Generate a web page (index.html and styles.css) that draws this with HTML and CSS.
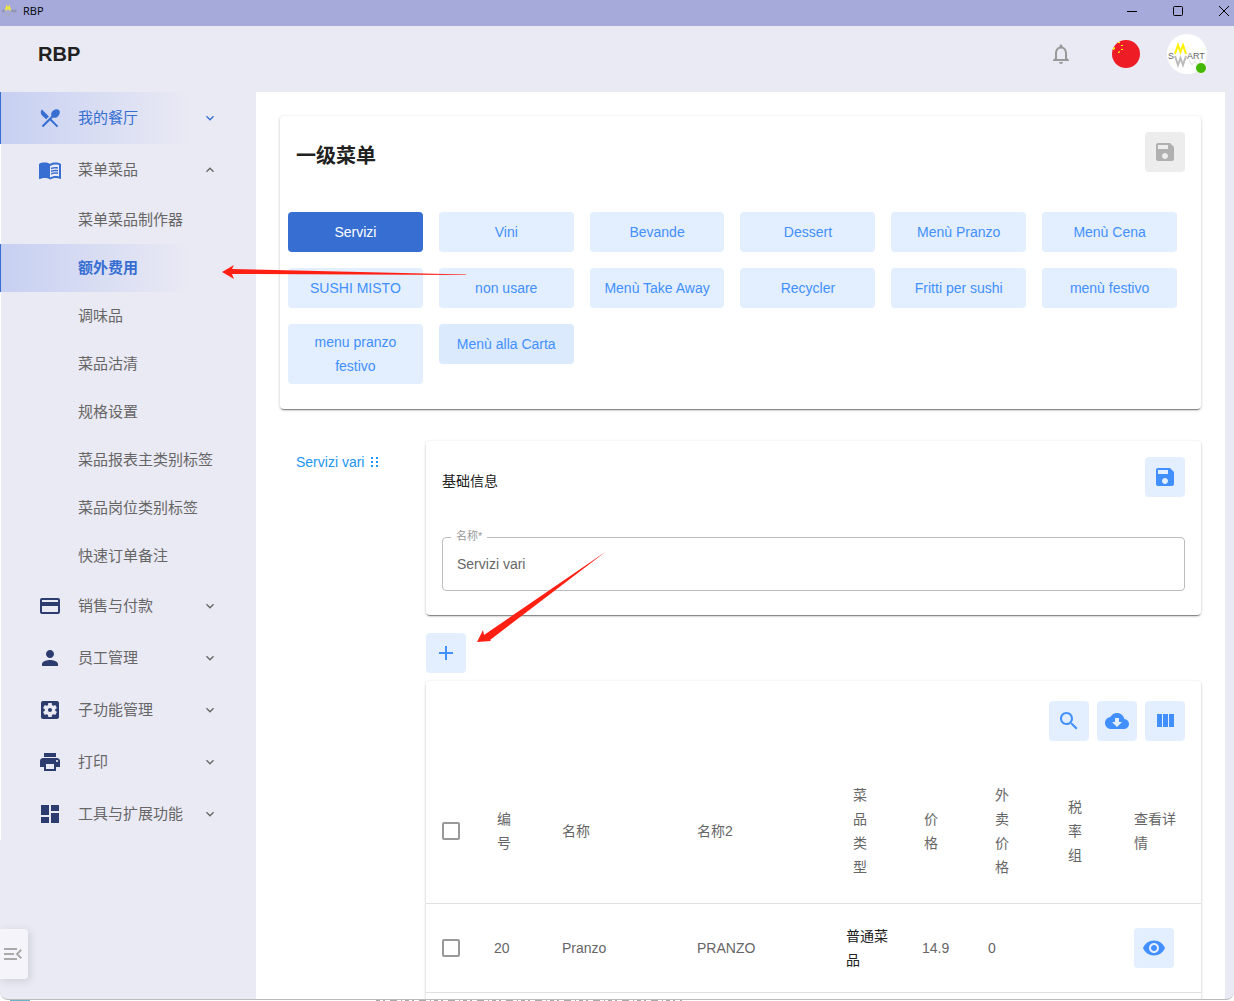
FILE: index.html
```html
<!DOCTYPE html>
<html lang="zh-CN">
<head>
<meta charset="utf-8">
<meta name="viewport" content="width=device-width, initial-scale=1">
<title>RBP</title>
<link rel="stylesheet" href="styles.css">
</head>
<body>
<svg class="sprite" aria-hidden="true">
  <symbol id="i-dining" viewBox="0 0 24 24"><path d="M8.1 13.34l2.83-2.83L3.91 3.5c-1.56 1.56-1.56 4.09 0 5.66l4.19 4.18zm6.78-1.81c1.53.71 3.68.21 5.27-1.38 1.91-1.91 2.28-4.65.81-6.12-1.46-1.46-4.2-1.1-6.12.81-1.59 1.59-2.09 3.74-1.38 5.27L3.7 19.87l1.41 1.41L12 14.41l6.88 6.88 1.41-1.41L13.41 13l1.47-1.47z"/></symbol>
  <symbol id="i-book" viewBox="0 0 24 24"><path d="M21 5c-1.11-.35-2.33-.5-3.5-.5-1.95 0-4.05.4-5.5 1.5-1.45-1.1-3.55-1.5-5.5-1.5S2.45 4.9 1 6v14.65c0 .25.25.5.5.5.1 0 .15-.05.25-.05C3.1 20.45 5.05 20 6.5 20c1.95 0 4.05.4 5.5 1.5 1.35-.85 3.8-1.5 5.5-1.5 1.65 0 3.35.3 4.75 1.05.1.05.15.05.25.05.25 0 .5-.25.5-.5V6c-.6-.45-1.25-.75-2-1zm0 13.5c-1.1-.35-2.3-.5-3.5-.5-1.7 0-4.15.65-5.5 1.5V8c1.35-.85 3.8-1.5 5.5-1.5 1.2 0 2.4.15 3.5.5v11.5z"/><path d="M17.5 10.5c.88 0 1.73.09 2.5.26V9.24c-.79-.15-1.64-.24-2.5-.24-1.7 0-3.24.29-4.5.83v1.66c1.13-.64 2.7-.99 4.5-.99zM13 12.49v1.66c1.13-.64 2.7-.99 4.5-.99.88 0 1.73.09 2.5.26V11.9c-.79-.15-1.64-.24-2.5-.24-1.7 0-3.24.3-4.5.83zm4.5 1.84c-1.7 0-3.24.29-4.5.83v1.66c1.13-.64 2.7-.99 4.5-.99.88 0 1.73.09 2.5.26v-1.52c-.79-.16-1.64-.24-2.5-.24z"/></symbol>
  <symbol id="i-card" viewBox="0 0 24 24"><path d="M20 4H4c-1.11 0-1.99.89-1.99 2L2 18c0 1.11.89 2 2 2h16c1.11 0 2-.89 2-2V6c0-1.11-.89-2-2-2zm0 14H4v-6h16v6zm0-10H4V6h16v2z"/></symbol>
  <symbol id="i-person" viewBox="0 0 24 24"><path d="M12 12c2.21 0 4-1.79 4-4s-1.79-4-4-4-4 1.79-4 4 1.79 4 4 4zm0 2c-2.67 0-8 1.34-8 4v2h16v-2c0-2.66-5.33-4-8-4z"/></symbol>
  <symbol id="i-settings" viewBox="0 0 24 24"><path d="M12 10c-1.1 0-2 .9-2 2s.9 2 2 2 2-.9 2-2-.9-2-2-2zm7-7H5c-1.11 0-2 .9-2 2v14c0 1.1.89 2 2 2h14c1.11 0 2-.9 2-2V5c0-1.1-.89-2-2-2zm-1.75 9c0 .23-.02.46-.05.68l1.48 1.16c.13.11.17.3.08.45l-1.4 2.42c-.09.15-.27.21-.43.15l-1.74-.7c-.36.28-.76.51-1.18.69l-.26 1.85c-.03.17-.18.3-.35.3h-2.8c-.17 0-.32-.13-.35-.29l-.26-1.85c-.43-.18-.82-.41-1.18-.69l-1.74.7c-.16.06-.34 0-.43-.15l-1.4-2.42c-.09-.15-.05-.34.08-.45l1.48-1.16c-.03-.23-.05-.46-.05-.69 0-.23.02-.46.05-.68l-1.48-1.16c-.13-.11-.17-.3-.08-.45l1.4-2.42c.09-.15.27-.21.43-.15l1.74.7c.36-.28.76-.51 1.18-.69l.26-1.85c.03-.17.18-.3.35-.3h2.8c.17 0 .32.13.35.29l.26 1.85c.43.18.82.41 1.18.69l1.74-.7c.16-.06.34 0 .43.15l1.4 2.42c.09.15.05.34-.08.45l-1.48 1.16c.03.23.05.46.05.69z"/></symbol>
  <symbol id="i-print" viewBox="0 0 24 24"><path d="M19 8H5c-1.66 0-3 1.34-3 3v6h4v4h12v-4h4v-6c0-1.66-1.34-3-3-3zm-3 11H8v-5h8v5zm3-7c-.55 0-1-.45-1-1s.45-1 1-1 1 .45 1 1-.45 1-1 1zm-1-9H6v4h12V3z"/></symbol>
  <symbol id="i-dashboard" viewBox="0 0 24 24"><path d="M3 13h8V3H3v10zm0 8h8v-6H3v6zm10 0h8V11h-8v10zm0-18v6h8V3h-8z"/></symbol>
  <symbol id="i-down" viewBox="0 0 24 24"><path d="M16.59 8.59L12 13.17 7.41 8.59 6 10l6 6 6-6z"/></symbol>
  <symbol id="i-up" viewBox="0 0 24 24"><path d="M12 8l-6 6 1.41 1.41L12 10.83l4.59 4.58L18 14z"/></symbol>
  <symbol id="i-save" viewBox="0 0 24 24"><path d="M17 3H5c-1.11 0-2 .9-2 2v14c0 1.1.89 2 2 2h14c1.1 0 2-.9 2-2V7l-4-4zm-5 16c-1.66 0-3-1.34-3-3s1.34-3 3-3 3 1.34 3 3-1.34 3-3 3zm3-10H5V5h10v4z"/></symbol>
  <symbol id="i-add" viewBox="0 0 24 24"><path d="M19 13h-6v6h-2v-6H5v-2h6V5h2v6h6v2z"/></symbol>
  <symbol id="i-search" viewBox="0 0 24 24"><path d="M15.5 14h-.79l-.28-.27C15.41 12.59 16 11.11 16 9.5 16 5.91 13.09 3 9.5 3S3 5.91 3 9.5 5.91 16 9.5 16c1.61 0 3.09-.59 4.23-1.57l.27.28v.79l5 4.99L20.49 19l-4.99-5zm-6 0C7.01 14 5 11.99 5 9.5S7.01 5 9.5 5 14 7.01 14 9.5 11.99 14 9.5 14z"/></symbol>
  <symbol id="i-cloud" viewBox="0 0 24 24"><path d="M19.35 10.04C18.67 6.59 15.64 4 12 4 9.11 4 6.6 5.64 5.35 8.04 2.34 8.36 0 10.91 0 14c0 3.31 2.69 6 6 6h13c2.76 0 5-2.24 5-5 0-2.64-2.05-4.78-4.65-4.96zM17 13l-5 5-5-5h3V9h4v4h3z"/></symbol>
  <symbol id="i-columns" viewBox="0 0 24 24"><path d="M10 18h5V5h-5v13zm-6 0h5V5H4v13zM16 5v13h5V5h-5z"/></symbol>
  <symbol id="i-eye" viewBox="0 0 24 24"><path d="M12 4.5C7 4.5 2.73 7.61 1 12c1.73 4.39 6 7.5 11 7.5s9.27-3.11 11-7.5c-1.73-4.39-6-7.5-11-7.5zM12 17c-2.76 0-5-2.24-5-5s2.24-5 5-5 5 2.24 5 5-2.24 5-5 5zm0-8c-1.66 0-3 1.34-3 3s1.34 3 3 3 3-1.34 3-3-1.34-3-3-3z"/></symbol>
  <symbol id="i-menu-open" viewBox="0 0 24 24"><path d="M3 18h13v-2H3v2zM3 13h10v-2H3v2zm0-7v2h13V6H3zm18 9.59L17.42 12 21 8.41 19.59 7l-5 5 5 5L21 15.59z"/></symbol>
  <symbol id="i-bell" viewBox="0 0 24 24"><path d="M12 22c1.1 0 2-.9 2-2h-4c0 1.1.9 2 2 2zm6-6v-5c0-3.07-1.63-5.64-4.5-6.32V4c0-.83-.67-1.5-1.5-1.5s-1.5.67-1.5 1.5v.68C7.64 5.36 6 7.92 6 11v5l-2 2v1h16v-1l-2-2zm-2 1H8v-6c0-2.48 1.51-4.5 4-4.5s4 2.02 4 4.5v6z"/></symbol>
  <symbol id="i-drag" viewBox="0 0 8 10"><path d="M0 0h2v2H0zM5 0h2v2H5zM0 4h2v2H0zM5 4h2v2H5zM0 8h2v2H0zM5 8h2v2H5z"/></symbol>
</svg>

<div class="window">
  <header class="titlebar">
    <svg class="app-logo" viewBox="0 0 40 40">
      <path d="M1 20h7M24 20h14" stroke="#8d8fa8" stroke-width="6" stroke-dasharray="5 2"/>
      <path d="M9 24l3 7 3-5 3 5 3-7" fill="none" stroke="#a9abc2" stroke-width="3"/>
      <path d="M9 19l3-10 3 6 3-6 3 10" fill="none" stroke="#f2e63c" stroke-width="4"/>
    </svg>
    <span class="window-title">RBP</span>
    <div class="window-controls">
      <button type="button" aria-label="最小化"><svg viewBox="0 0 12 12"><path d="M1 6.5h10"/></svg></button>
      <button type="button" aria-label="最大化"><svg viewBox="0 0 12 12"><rect x="1.500" y="1.500" width="9" height="9" rx="1"/></svg></button>
      <button type="button" aria-label="关闭"><svg viewBox="0 0 12 12"><path d="M1 1l10 10M11 1L1 11"/></svg></button>
    </div>
  </header>

  <div class="appbar">
    <h1 class="brand">RBP</h1>
    <div class="account">
      <button type="button" class="plain" aria-label="通知"><svg class="bell"><use href="#i-bell"/></svg></button>
      <button type="button" class="plain" aria-label="语言">
        <svg class="flag" viewBox="0 0 28 28"><circle cx="14" cy="14" r="14" fill="#ee1c25"/><path fill="#ff0" d="M1 8l2-1v2l-2 1zM6 2h2v1H6zM9 5h2v1H9zM9 9h2v1H9zM6 12l2-1v1l-1 1H6z"/></svg>
      </button>
      <button type="button" class="avatar" aria-label="账户">
        <svg viewBox="0 0 40 40">
          <path d="M22 26l3 5 3-4 3 4 3-5" fill="none" stroke="#ddd"/>
          <path d="M8 22l3 9 2.500-7 2.500 7 3-9" fill="none" stroke="#bbb" stroke-width="2"/>
          <path d="M8 20l3-9 2.500 7 2.500-7 3 9" fill="none" stroke="#fff200" stroke-width="2"/>
          <text x="1" y="25" font-size="9" fill="#666">S</text>
          <text x="20" y="25" font-size="9" fill="#666">ART</text>
        </svg>
        <span class="online"></span>
      </button>
    </div>
  </div>

  <div class="body">
    <aside class="sidebar">
      <nav>
        <a href="#" class="nav-item active"><svg class="nav-icon"><use href="#i-dining"/></svg><span>我的餐厅</span><svg class="chevron"><use href="#i-down"/></svg></a>
        <a href="#" class="nav-item open"><svg class="nav-icon"><use href="#i-book"/></svg><span>菜单菜品</span><svg class="chevron"><use href="#i-up"/></svg></a>
        <div class="subnav">
          <a href="#">菜单菜品制作器</a>
          <a href="#" class="active">额外费用</a>
          <a href="#">调味品</a>
          <a href="#">菜品沽清</a>
          <a href="#">规格设置</a>
          <a href="#">菜品报表主类别标签</a>
          <a href="#">菜品岗位类别标签</a>
          <a href="#">快速订单备注</a>
        </div>
        <a href="#" class="nav-item"><svg class="nav-icon"><use href="#i-card"/></svg><span>销售与付款</span><svg class="chevron"><use href="#i-down"/></svg></a>
        <a href="#" class="nav-item"><svg class="nav-icon"><use href="#i-person"/></svg><span>员工管理</span><svg class="chevron"><use href="#i-down"/></svg></a>
        <a href="#" class="nav-item"><svg class="nav-icon"><use href="#i-settings"/></svg><span>子功能管理</span><svg class="chevron"><use href="#i-down"/></svg></a>
        <a href="#" class="nav-item"><svg class="nav-icon"><use href="#i-print"/></svg><span>打印</span><svg class="chevron"><use href="#i-down"/></svg></a>
        <a href="#" class="nav-item"><svg class="nav-icon"><use href="#i-dashboard"/></svg><span>工具与扩展功能</span><svg class="chevron"><use href="#i-down"/></svg></a>
      </nav>
      <button type="button" class="collapse" aria-label="收起菜单"><svg><use href="#i-menu-open"/></svg></button>
    </aside>

    <main class="content">
      <section class="card menus">
        <div class="card-head">
          <h2>一级菜单</h2>
          <button type="button" class="icon-btn" disabled aria-label="保存"><svg><use href="#i-save"/></svg></button>
        </div>
        <div class="menu-grid">
          <button type="button" class="selected">Servizi</button>
          <button type="button">Vini</button>
          <button type="button">Bevande</button>
          <button type="button">Dessert</button>
          <button type="button">Menù Pranzo</button>
          <button type="button">Menù Cena</button>
          <button type="button">SUSHI MISTO</button>
          <button type="button">non usare</button>
          <button type="button">Menù Take Away</button>
          <button type="button">Recycler</button>
          <button type="button">Fritti per sushi</button>
          <button type="button">menù festivo</button>
          <button type="button">menu pranzo festivo</button>
          <button type="button" class="hovered">Menù alla Carta</button>
        </div>
      </section>

      <div class="detail">
        <div class="tabs">
          <a href="#">Servizi vari<svg><use href="#i-drag"/></svg></a>
        </div>
        <div class="panel">
          <section class="card info">
            <div class="card-head">
              <h3>基础信息</h3>
              <button type="button" class="icon-btn" aria-label="保存"><svg><use href="#i-save"/></svg></button>
            </div>
            <div class="field">
              <label for="name">名称*</label>
              <input id="name" type="text" value="Servizi vari">
            </div>
          </section>
          <button type="button" class="icon-btn add" aria-label="添加"><svg><use href="#i-add"/></svg></button>
          <section class="card list">
            <div class="toolbar">
              <button type="button" class="icon-btn" aria-label="搜索"><svg><use href="#i-search"/></svg></button>
              <button type="button" class="icon-btn" aria-label="下载"><svg><use href="#i-cloud"/></svg></button>
              <button type="button" class="icon-btn" aria-label="显示列"><svg><use href="#i-columns"/></svg></button>
            </div>
            <table>
              <colgroup><col class="c-check"><col class="c-id"><col class="c-name"><col class="c-name2"><col class="c-type"><col class="c-price"><col class="c-out"><col class="c-tax"><col class="c-view"></colgroup>
              <thead>
                <tr>
                  <th><input type="checkbox" aria-label="全选"></th>
                  <th class="narrow id"><span>编号</span></th>
                  <th>名称</th>
                  <th>名称2</th>
                  <th class="narrow"><span>菜品类型</span></th>
                  <th class="narrow price"><span>价格</span></th>
                  <th class="narrow"><span>外卖价格</span></th>
                  <th class="narrow"><span>税率组</span></th>
                  <th>查看详情</th>
                </tr>
              </thead>
              <tbody>
                <tr>
                  <td><input type="checkbox" aria-label="选择 Pranzo"></td>
                  <td class="id">20</td>
                  <td>Pranzo</td>
                  <td>PRANZO</td>
                  <td class="type">普通菜品</td>
                  <td>14.9</td>
                  <td>0</td>
                  <td></td>
                  <td><button type="button" class="icon-btn" aria-label="查看"><svg><use href="#i-eye"/></svg></button></td>
                </tr>
              </tbody>
            </table>
          </section>
        </div>
      </div>
    </main>
  </div>
</div>

<svg class="behind" aria-hidden="true"><path d="M10 0h20" stroke="#6fb3c9" stroke-width="2"/><path d="M376 0h306" stroke="#aaa" stroke-width="2" stroke-dasharray="4 3 2 5 7 4 1 3"/></svg>
<svg class="arrows" aria-hidden="true">
  <path d="M222 272l12-7-2 4 234 5.500v.5l-234-1 2 5z"/>
  <path d="M477 642l6-12 1 5 122-83.500-116 88.500 1 1z"/>
</svg>
</body>
</html>
```

FILE: styles.css
```css
* { box-sizing: border-box; }

html, body { height: 100%; }

body {
  margin: 0;
  display: flex;
  flex-direction: column;
  overflow: hidden;
  background: #fff;
  color: #666;
  font: 14px/24px "Liberation Sans", "Noto Sans CJK SC", sans-serif;
}

a { color: inherit; text-decoration: none; }

button {
  font: inherit;
  border: 0;
  padding: 0;
  background: none;
}

svg { display: block; fill: currentColor; flex: none; }

h1, h2, h3 { margin: 0; color: #212121; }

.sprite { position: absolute; width: 0; height: 0; }

.window {
  flex: 1;
  min-height: 0;
  display: flex;
  flex-direction: column;
  overflow: hidden;
  background: #eaeaf4;
  border-bottom: 1px solid #bbb;
  border-radius: 0 0 8px 8px;
}

/* Title bar */
.titlebar {
  flex: none;
  display: flex;
  align-items: center;
  height: 26px;
  padding-left: 2px;
  background: #a5aadb;
  color: #000;
}

.app-logo { width: 16px; height: 16px; margin-bottom: 4px; }

.window-title {
  margin-left: 5px;
  padding-bottom: 4px;
  font: 11px/16px "Open Sans", sans-serif;
}

.window-controls {
  display: flex;
  gap: 34px;
  margin-left: auto;
  padding: 0 4px 4px 0;
}

.window-controls svg {
  width: 12px;
  height: 12px;
  fill: none;
  stroke: #000;
}

/* App bar */
.appbar {
  flex: none;
  display: flex;
  align-items: center;
  justify-content: space-between;
  height: 66px;
  padding: 0 27px 10px 38px;
}

.brand { font-size: 20px; }

.account { display: flex; align-items: center; }

.bell { width: 24px; height: 24px; color: #999; }

.flag { width: 28px; height: 28px; margin: 0 27px 0 39px; }

.avatar {
  position: relative;
  width: 40px;
  height: 40px;
  border-radius: 50%;
  background: #fff;
}

.avatar svg { width: 40px; height: 40px; }

.online {
  position: absolute;
  right: 0;
  bottom: 0;
  width: 12px;
  height: 12px;
  border: 1px solid #fff;
  border-radius: 50%;
  background: #44b700;
}

/* Sidebar */
.body {
  flex: 1;
  min-height: 0;
  display: flex;
  padding-right: 9px;
}

.sidebar { position: relative; flex: none; width: 256px; font-size: 15px; }

.nav-item, .subnav a {
  display: flex;
  align-items: center;
  border-left: 1px solid #fff;
}

.nav-item { height: 52px; padding: 0 38px 0 37px; }

.nav-item span { margin-left: 16px; }

.nav-icon { width: 24px; height: 24px; color: #2c3c6e; }

.chevron { width: 16px; height: 16px; margin-left: auto; }

.subnav a { height: 48px; padding-left: 77px; }

.nav-item.active, .subnav .active {
  border-left-color: #366ed2;
  color: #366ed2;
  background: linear-gradient(90deg, #c7d0f2, rgba(234, 234, 244, 0) 75%);
}

.subnav .active { font-weight: 700; }

.nav-item.active .nav-icon, .nav-item.open .nav-icon { color: #366ed2; }

.collapse {
  position: absolute;
  left: 0;
  bottom: 20px;
  width: 28px;
  height: 50px;
  padding-left: 1px;
  border-radius: 0 4px 4px 0;
  background: #f4f4fa;
  box-shadow: 2px 2px 8px rgba(0, 0, 0, .12);
  color: #aaa;
}

.collapse svg { width: 24px; height: 24px; }

/* Content */
.content {
  flex: 1;
  min-width: 0;
  overflow: hidden;
  padding: 24px 24px 0;
  background: #fff;
}

.card {
  border-radius: 4px;
  background: #fff;
  box-shadow: 0 2px 1px -1px rgba(0, 0, 0, .4), 0 1px 3px rgba(0, 0, 0, .26);
}

.card-head {
  display: flex;
  align-items: center;
  justify-content: space-between;
  padding: 16px;
}

.card-head h2 { padding-top: 8px; font-size: 20px; }

.card-head h3 { padding-top: 8px; font-size: 14px; font-weight: 400; }

.icon-btn {
  display: grid;
  place-items: center;
  width: 40px;
  height: 40px;
  border-radius: 4px;
  background: #e3eeff;
  color: #4290ff;
}

.icon-btn svg { width: 24px; height: 24px; }

.icon-btn:disabled { background: #ededed; color: #b0b0b0; }

.menu-grid {
  display: grid;
  grid-template-columns: repeat(6, 1fr);
  align-items: start;
  gap: 16px;
  padding: 24px 24px 25px 8px;
}

.menu-grid button {
  min-height: 40px;
  padding: 6px 12px;
  border-radius: 4px;
  background: #e3eeff;
  color: #4290ff;
}

.menu-grid .selected { background: #366ed2; color: #fff; }

.menu-grid .hovered { background: #dceafe; }

.detail { display: flex; gap: 16px; margin-top: 32px; }

.tabs { flex: none; width: 130px; padding: 9px 0 0 16px; }

.tabs a { display: flex; align-items: center; gap: 7px; color: #2196f3; }

.tabs svg { width: 8px; height: 10px; }

.panel { flex: 1; min-width: 0; }

.field { position: relative; padding: 24px 16px; }

.field input {
  display: block;
  width: 100%;
  height: 54px;
  padding: 0 14px;
  border: 1px solid #bdbdbd;
  border-radius: 4px;
  background: #fff;
  color: #666;
  font: inherit;
}

.field label {
  position: absolute;
  top: 15px;
  left: 25px;
  padding: 0 5px;
  background: #fff;
  color: #999;
  font-size: 11px;
  line-height: 16px;
}

.add { margin: 18px 0 8px; }

.toolbar {
  display: flex;
  justify-content: flex-end;
  gap: 8px;
  padding: 20px 16px 18px;
}

/* Dish table */
table { width: 100%; table-layout: fixed; border-collapse: collapse; }

th, td {
  height: 89px;
  padding: 0 0 0 16px;
  border-bottom: 1px solid #e0e0e0;
  text-align: left;
  font-weight: 400;
}

th { height: 144px; }

tbody tr:last-child td { border-bottom-color: #e0e0e0; }

.list { padding-bottom: 24px; }

.narrow { padding-left: 23px; }

.narrow span { display: block; width: 15px; }

th.id { padding-left: 13px; }

th.price { padding-left: 18px; }

td.id { padding-left: 10px; }

td.type { padding-right: 16px; color: #212121; }

th:last-child { padding-right: 20px; }

.c-check { width: 58px; }
.c-id { width: 62px; }
.c-name2 { width: 149px; }
.c-type { width: 76px; }
.c-price { width: 66px; }
.c-out { width: 73px; }
.c-tax { width: 73px; }
.c-view { width: 83px; }

input[type="checkbox"] {
  appearance: none;
  display: block;
  width: 18px;
  height: 18px;
  margin: 0;
  border: 2px solid #999;
  border-radius: 2px;
}

/* Strip of the desktop under the window */
.behind { width: 100%; height: 1px; fill: none; }

/* Annotation arrows laid over the page */
.arrows {
  position: absolute;
  inset: 0;
  width: 100%;
  height: 100%;
  fill: #ff2014;
  pointer-events: none;
}
```
